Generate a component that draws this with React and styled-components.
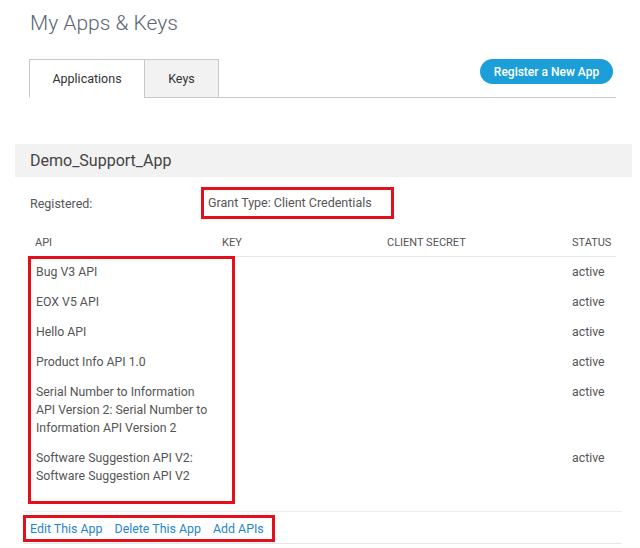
import React from 'react'
import styled, { createGlobalStyle } from 'styled-components'

const GlobalStyle = createGlobalStyle`
  body {
    margin: 0;
    background: #fff;
    font-family: Roboto, "Liberation Sans", Arial, sans-serif;
  }
`

const apis = [
  { name: 'Bug V3 API', status: 'active' },
  { name: 'EOX V5 API', status: 'active' },
  { name: 'Hello API', status: 'active' },
  { name: 'Product Info API 1.0', status: 'active' },
  { name: 'Serial Number to Information API Version 2: Serial Number to Information API Version 2', status: 'active' },
  { name: 'Software Suggestion API V2: Software Suggestion API V2', status: 'active' },
]

const App = () => (
  <>
    <GlobalStyle />
    <Page>
      <Top>
        <Title>My Apps &amp; Keys</Title>
        <TabBar>
          <Tabs>
            <Tab $active>Applications</Tab>
            <Tab>Keys</Tab>
          </Tabs>
          <RegisterButton>Register a New App</RegisterButton>
        </TabBar>
      </Top>

      <AppCard>
        <AppName>Demo_Support_App</AppName>
        <MetaRow>
          <MetaLabel>Registered:</MetaLabel>
          <Highlight>Grant Type: Client Credentials</Highlight>
        </MetaRow>

        <ApiTable>
          <HeadRow>
            <Cell>API</Cell>
            <Cell>Key</Cell>
            <Cell>Client Secret</Cell>
            <Cell>Status</Cell>
          </HeadRow>
          {apis.map((api) => (
            <Row key={api.name}>
              <NameCell>{api.name}</NameCell>
              <Cell />
              <Cell />
              <Cell>{api.status}</Cell>
            </Row>
          ))}
          <ColumnMark />
        </ApiTable>

        <Actions>
          <ActionBox>
            <ActionLink href="#">Edit This App</ActionLink>
            <ActionLink href="#">Delete This App</ActionLink>
            <ActionLink href="#">Add APIs</ActionLink>
          </ActionBox>
        </Actions>
      </AppCard>
    </Page>
  </>
)

export default App

const Page = styled.div`
  padding: 0 8px 0 15px;
`

const Top = styled.header`
  padding: 0 16px 0 14px;
`

const Title = styled.h1`
  margin: 0;
  padding: 11px 0 0 1px;
  font-size: 21px;
  line-height: 24px;
  font-weight: 300;
  color: #5a6573;
`

const TabBar = styled.div`
  display: flex;
  justify-content: space-between;
  align-items: flex-start;
  margin-top: 24px;
  border-bottom: 1px solid #c8c8c8;
`

const Tabs = styled.div`
  display: flex;
`

const Tab = styled.div`
  box-sizing: border-box;
  height: 39px;
  margin-bottom: -1px;
  width: ${(p) => (p.$active ? '116px' : '75px')};
  display: flex;
  align-items: center;
  justify-content: center;
  border: 1px solid #c8c8c8;
  border-bottom-color: ${(p) => (p.$active ? '#fff' : '#c8c8c8')};
  background: ${(p) => (p.$active ? '#fff' : '#f2f2f2')};
  font-size: 12.5px;
  color: #333;
  & + & {
    margin-left: -1px;
  }
`

const RegisterButton = styled.button`
  width: 133px;
  height: 25px;
  margin-right: 3px;
  border: none;
  border-radius: 13px;
  background: #1c9fd8;
  color: #fff;
  font-family: Roboto, "Liberation Sans", Arial, sans-serif;
  font-size: 12px;
  font-weight: 500;
  padding: 0;
`

const AppCard = styled.section`
  margin-top: 46px;
`

const AppName = styled.h2`
  margin: 0;
  height: 33px;
  line-height: 33px;
  padding-left: 15px;
  background: #f2f2f2;
  font-size: 16px;
  font-weight: 400;
  color: #444;
`

const MetaRow = styled.div`
  display: flex;
  align-items: center;
  padding: 10px 15px 0;
  font-size: 12.5px;
  color: #555;
`

const MetaLabel = styled.span`
  width: 171px;
`

const Highlight = styled.span`
  box-sizing: border-box;
  width: 193px;
  height: 32px;
  line-height: 26px;
  padding-left: 4px;
  border: 3px solid #e3101b;
`

const ApiTable = styled.div`
  position: relative;
  margin: 9px 16px 0 15px;
  padding-bottom: 20px;
`

const HeadRow = styled.div`
  box-sizing: border-box;
  display: grid;
  grid-template-columns: 187px 165px 185px 1fr;
  align-items: center;
  height: 29px;
  border-bottom: 1px solid #e6e6e6;
  font-size: 11px;
  text-transform: uppercase;
  color: #555;
`

const Row = styled.div`
  display: grid;
  grid-template-columns: 187px 165px 185px 1fr;
  align-items: start;
  padding: 6px 0;
  font-size: 12.3px;
  line-height: 18px;
  color: #555;
`

const Cell = styled.div`
  padding-left: 5px;
`

const NameCell = styled.div`
  padding: 0 8px 0 6px;
`

const ColumnMark = styled.div`
  position: absolute;
  left: -2px;
  top: 28px;
  width: 207px;
  height: 248px;
  box-sizing: border-box;
  border: 3px solid #e3101b;
  pointer-events: none;
`

const Actions = styled.div`
  margin: 0 10px 0 8px;
  padding: 3px 0 1px;
  border-top: 1px solid #ececec;
  border-bottom: 1px solid #e6e6e6;
`

const ActionBox = styled.div`
  box-sizing: border-box;
  display: inline-flex;
  align-items: center;
  gap: 12px;
  height: 27px;
  padding: 0 8px 0 4px;
  border: 3px solid #e3101b;
`

const ActionLink = styled.a`
  font-size: 12.4px;
  color: #1f86cf;
  text-decoration: none;
`
